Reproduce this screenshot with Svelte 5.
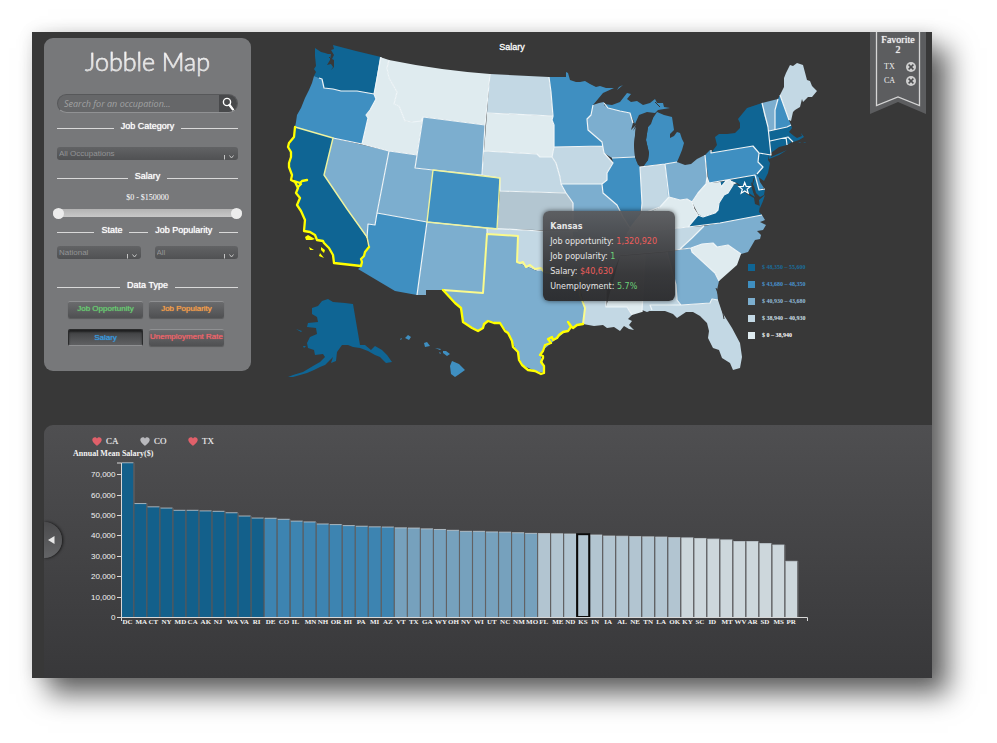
<script>
  const palette = ['#0f6594', '#3f8fc1', '#7caecf', '#c3d8e4', '#dfebef'];
  const barPalette = ['#13608b', '#3d84b1', '#76a1bd', '#b2c5d1', '#cdd7dc'];

  const legend = [
    '$ 48,350 – 55,600',
    '$ 43,680 – 48,350',
    '$ 40,930 – 43,680',
    '$ 38,940 – 40,930',
    '$ 0 – 38,940'
  ];
  const legendText = ['#1a6c9b', '#4a93cf', '#94bddb', '#cfe0ea', '#ffffff'];

  // Each state: id, salary band, outline.
  const states = [
    ['WA', 0, 'M315,48 L318,50 L321,52 L325,53 L328,54 L331,54 L330,60 L327,65 L331,64 L333,67 L331,70 L334,67 L334,60 L332,59 L334,55 L331,50 L334,49 L333,45 L356,51 L381,57 L374,94 L357,91 L341,91 L333,89 L324,88 L322,79 L319,78 L314,76 L316,72 L314,69 L316,66 L315,56 Z'],
    ['OR', 1, 'M314,76 L319,78 L322,79 L324,88 L333,89 L341,91 L357,91 L374,94 L376,99 L370,110 L366,115 L368,118 L362,144 L333,138 L295,127 L296,122 L297,115 L301,108 L305,98 L309,90 L312,83 Z'],
    ['CA', 0, 'M295,127 L333,138 L324,175 L347,209 L366,237 L367,243 L369,247 L365,252 L364,256 L361,259 L362,266 L334,263 L333,255 L329,248 L324,243 L317,240 L315,235 L304,231 L305,220 L301,211 L297,205 L300,197 L297,193 L295,182 L289,167 L291,157 L288,147 L294,137 Z'],
    ['NV', 2, 'M333,138 L389,151 L377,213 L375,225 L368,224 L367,238 L347,209 L324,175 Z'],
    ['ID', 4, 'M380,57 L389,60 L387,68 L389,78 L397,92 L394,104 L399,106 L405,121 L413,122 L421,121 L423,117 L417,155 L389,151 L362,144 L368,118 L366,115 L370,110 L376,99 L374,94 Z'],
    ['MT', 4, 'M389,60 Q438,70 490,74 L485,125 L423,117 L421,122 L413,122 L405,121 L399,106 L394,104 L397,92 L389,78 L387,68 Z'],
    ['WY', 2, 'M423,117 L485,125 L482,175 L415,168 Z'],
    ['UT', 2, 'M389,151 L417,155 L415,168 L433,170 L427,222 L377,213 Z'],
    ['CO', 1, 'M433,170 L500,178 L497,229 L427,222 Z'],
    ['AZ', 1, 'M377,213 L427,222 L417,295 L395,291 L358,269 L362,266 L361,259 L365,252 L369,247 L367,237 L368,224 L375,225 Z'],
    ['NM', 2, 'M427,222 L487,228 L483,293 L443,290 L426,290 L426,295 L417,295 Z'],
    ['OK', 3, 'M487,228 L540,231 L578,231 L580,279 L543,271 L537,271 L530,268 L523,265 L517,262 L518,236 L487,234 Z'],
    ['TX', 2, 'M487,234 L518,236 L517,262 L523,265 L530,268 L537,271 L543,271 L579,278 L580,295 L585,308 L583,324 L570,328 L555,340 L543,350 L541,357 L543,363 L544,373 L535,371 L522,365 L517,352 L508,333 L500,323 L488,321 L483,328 L478,331 L463,322 L461,308 L443,290 L483,293 Z'],
    ['NE', 3, 'M484,151 L537,154 L540,157 L552,157 L556,163 L560,177 L561,184 L566,193 L500,191 L500,178 L482,175 Z'],
    ['SD', 4, 'M487,113 L553,116 L552,120 L554,125 L554,147 L553,157 L540,157 L537,154 L484,151 Z'],
    ['ND', 3, 'M490,74 L549,77 L551,92 L553,116 L487,113 Z'],
    ['MN', 1, 'M549,77 L566,77 L566,72 L568,73 L570,80 L576,82 L580,82 L585,81 L590,84 L596,87 L600,86 L606,88 L614,88 L603,93 L593,105 L591,115 L587,119 L588,130 L602,142 L603,146 L554,147 L554,125 L552,120 L553,116 L551,92 Z'],
    ['IA', 3, 'M554,147 L603,146 L604,153 L613,163 L607,173 L607,180 L602,184 L561,184 L560,177 L556,163 L552,157 Z'],
    ['WI', 2, 'M593,105 L599,103 L604,102 L604,105 L608,108 L620,111 L630,113 L633,123 L631,130 L636,125 L634,145 L635,157 L612,158 L604,153 L602,142 L588,130 L587,119 L591,115 Z'],
    ['MI', 1, 'M604,104 L612,105 L620,102 L627,93 L631,94 L627,99 L631,102 L637,101 L643,105 L650,103 L655,99 L657,103 L663,103 L664,107 L670,108 L658,110 L655,113 L647,112 L639,115 L635,124 L630,113 L620,111 L608,108 Z M657,112 L664,115 L672,117 L674,130 L670,134 L670,138 L674,136 L677,132 L680,133 L682,139 L684,143 L682,150 L680,155 L677,162 L665,164 L643,166 L648,160 L649,153 L646,140 L648,127 L651,124 L653,118 Z M623,85 L617,90 L619,87 Z'],
    ['IL', 1, 'M612,158 L635,157 L637,162 L640,167 L642,203 L640,213 L637,220 L630,228 L625,225 L623,217 L617,205 L603,193 L602,184 L607,180 L607,173 L613,163 Z'],
    ['MO', 2, 'M561,184 L602,184 L603,193 L617,205 L623,217 L630,228 L627,240 L573,237 L573,203 L566,193 Z'],
    ['IN', 3, 'M640,167 L665,164 L669,197 L666,202 L660,207 L650,212 L641,214 L642,203 Z'],
    ['OH', 2, 'M665,164 L677,162 L685,165 L691,164 L697,159 L705,155 L707,177 L706,184 L698,193 L692,202 L687,199 L680,200 L668,197 Z'],
    ['KY', 4, 'M669,197 L680,200 L687,199 L692,202 L694,209 L698,215 L688,227 L660,230 L627,233 L630,228 L641,214 L650,212 L660,207 Z'],
    ['WV', 4, 'M707,177 L709,183 L720,182 L721,187 L726,181 L730,180 L737,183 L733,185 L728,193 L724,195 L719,203 L718,210 L715,213 L703,217 L698,214 L692,202 L698,193 L706,184 Z'],
    ['VA', 0, 'M688,227 L720,223 L762,215 L759,212 L760,206 L755,204 L754,198 L747,194 L743,190 L737,184 L733,185 L728,193 L724,195 L719,203 L718,210 L715,213 L703,217 L698,215 Z M765,195 L763,201 L760,208 L759,200 Z'],
    ['MD', 0, 'M720,182 L755,175 L759,190 L765,189 L764,195 L760,197 L756,193 L754,186 L751,182 L753,192 L755,197 L747,192 L741,186 L737,183 L730,180 L726,181 L721,187 Z'],
    ['DE', 1, 'M755,175 L758,174 L760,182 L764,188 L759,190 Z'],
    ['NJ', 0, 'M759,153 L769,155 L768,160 L770,163 L768,173 L764,181 L757,176 L757,174 L763,167 L758,162 Z'],
    ['PA', 1, 'M705,155 L710,150 L711,153 L753,146 L759,153 L758,162 L763,167 L757,174 L755,175 L709,183 Z'],
    ['NY', 0, 'M711,153 L717,145 L715,137 L719,134 L727,134 L735,133 L740,128 L740,123 L738,119 L747,108 L762,103 L764,115 L768,127 L770,141 L771,153 L771,157 L787,150 L779,155 L769,159 L769,155 L759,153 L753,146 Z'],
    ['VT', 2, 'M762,103 L778,99 L775,110 L775,130 L769,131 L768,127 L764,115 Z'],
    ['NH', 1, 'M778,99 L780,95 L789,120 L791,125 L787,127 L775,130 L775,110 Z'],
    ['ME', 3, 'M780,95 L784,87 L784,78 L786,73 L790,65 L793,66 L797,63 L803,65 L807,80 L810,81 L812,86 L817,91 L812,97 L808,97 L803,102 L802,99 L800,107 L795,110 L793,112 L791,121 L789,120 Z'],
    ['MA', 0, 'M769,131 L775,130 L787,127 L791,125 L792,128 L789,132 L794,136 L797,138 L802,136 L801,133 L804,137 L799,140 L793,142 L788,137 L769,141 Z M798,143 L801,142 L800,143 Z M803,143 L806,142 L805,143 Z'],
    ['CT', 0, 'M770,141 L786,137 L787,145 L779,147 L771,153 Z'],
    ['RI', 0, 'M786,137 L788,137 L792,142 L787,145 Z'],
    ['TN', 3, 'M627,233 L660,230 L688,227 L704,226 L692,238 L680,249 L667,251 L620,255 Z'],
    ['NC', 2, 'M704,226 L720,223 L762,215 L765,220 L760,222 L766,225 L763,230 L757,231 L761,235 L760,239 L755,240 L748,252 L741,254 L728,245 L717,247 L713,243 L691,248 L680,249 L692,238 Z'],
    ['SC', 4, 'M691,248 L702,244 L713,243 L717,247 L728,245 L741,254 L737,265 L728,273 L719,281 L715,273 L692,252 Z'],
    ['GA', 2, 'M667,252 L691,248 L692,252 L715,273 L719,281 L717,290 L718,300 L712,300 L710,303 L681,305 L677,300 L676,285 Z'],
    ['AL', 3, 'M645,254 L667,252 L676,285 L677,300 L681,305 L650,305 L652,310 L647,312 L642,310 Z'],
    ['MS', 4, 'M620,256 L645,254 L642,312 L632,315 L627,307 L606,307 Z'],
    ['AR', 3, 'M576,237 L627,240 L620,256 L606,290 L580,290 Z'],
    ['LA', 3, 'M580,288 L606,288 L606,307 L627,307 L632,315 L628,319 L632,321 L629,325 L634,330 L629,329 L624,326 L620,331 L614,327 L607,328 L603,325 L594,326 L583,324 L585,308 Z'],
    ['FL', 3, 'M650,305 L681,305 L710,303 L712,300 L718,300 L722,312 L732,328 L740,343 L742,357 L740,368 L733,370 L730,363 L722,358 L719,350 L713,348 L708,338 L709,331 L707,323 L700,316 L693,312 L686,312 L677,318 L673,314 L665,311 L650,311 Z'],
    ['AK', 0, 'M312,308 L318,306 L322,301 L328,299 L333,302 L345,303 L353,304 L360,345 L365,345 L371,350 L375,346 L382,350 L387,355 L392,362 L386,363 L380,357 L375,355 L368,351 L360,348 L353,347 L348,345 L342,345 L337,352 L336,361 L331,363 L333,357 L330,360 L325,365 L320,367 L314,370 L307,373 L293,377 L288,377 L293,375 L303,372 L313,366 L320,362 L325,357 L323,354 L315,355 L314,350 L308,348 L307,343 L310,337 L317,334 L316,328 L307,327 L308,323 L318,322 L317,317 L312,314 Z M296,329 L302,331 L301,332 Z M303,346 L306,346 L304,348 Z'],
    ['HI', 1, 'M405,338 L408,335 L411,337 L409,340 Z M400,339 L402,338 L401,340 Z M424,343 L427,342 L430,346 L425,347 Z M435,348 L441,349 L440,350 Z M443,351 L446,351 L450,354 L447,356 L443,353 Z M439,352 L441,353 L440,354 Z M452,361 L459,364 L465,370 L458,375 L455,377 L451,374 L450,366 Z']
  ];

  const borders = [
    'M381,57 L374,94 L376,99 L370,110 L366,115 L368,118 L362,144',
    'M319,78 L322,79 L324,88 L333,89 L341,91 L357,91 L374,94',
    'M389,60 L387,68 L389,78 L397,92 L394,104 L399,106 L405,121 L413,122 L421,121 L423,117 L415,168 L433,170 L482,175',
    'M333,138 L362,144 L389,151 L417,155',
    'M389,151 L377,213 L427,222 L417,295',
    'M377,213 L375,225 L368,224 L367,238',
    'M490,74 L485,125 L423,117 M485,125 L482,175 L500,178 L500,191',
    'M487,113 L553,116 M549,77 L551,92 L553,116 L552,120 L554,125 L554,147',
    'M484,151 L537,154 L540,157 L552,157 L556,163 L560,177 L561,184 L566,193 L571,200 L573,203 L573,231',
    'M554,147 L552,157 M554,147 L603,146 M561,184 L602,184 L607,180 L607,173 L613,163 L604,153 L602,142 L588,130 L587,119 L591,115 L593,105',
    'M604,103 L608,108 L620,111 L630,113 L633,123 M612,158 L635,157 M602,184 L603,193 L617,205 L623,217 L630,228 L641,214 L642,203 L640,167 L665,164 L677,162',
    'M500,191 L566,193 M487,228 L540,231 L578,231 M487,228 L487,234',
    'M427,222 L497,229',
    'M665,164 L669,197 L680,200 L687,199 L692,202 L698,193 L706,184 L707,177 L705,155',
    'M669,197 L660,207 L641,214 M707,177 L709,183 L755,175 L759,190 L765,189',
    'M692,202 L694,209 L698,215 L703,217 L715,213 L718,210 L719,203 L724,195 L728,193 L733,185 L730,180 L726,181 L721,187 L720,182',
    'M698,215 L688,227 M627,233 L660,230 L688,227 L720,223 L762,215',
    'M704,226 L692,238 L680,249 M620,255 L667,251 L691,248 L702,244 L713,243 L717,247 L728,245 L741,254',
    'M691,248 L692,252 L715,273 L719,281 M718,300 L712,299 L710,303 L681,305 L677,300 L676,285 L667,252',
    'M681,305 L650,305 L652,310 M645,254 L642,312 M632,315 L627,307 L606,307 L606,290',
    'M711,150 L711,153 L753,146 L759,153 L771,155 L768,127 L762,103 M759,153 L758,162 L763,167 L757,174',
    'M778,99 L775,110 L775,130 M769,131 L787,127 L791,125 M780,95 L789,120 M770,141 L788,137 L793,142 M786,137 L787,145'
  ].join(' ');

  const bars = [
    ['DC', 75.6, 0], ['MA', 55.6, 0], ['CT', 54, 0], ['NY', 53.4, 0], ['MD', 52.3, 0], ['CA', 52.3, 0], ['AK', 52, 0],
    ['NJ', 51.8, 0], ['WA', 51.1, 0], ['VA', 49.5, 0], ['RI', 48.5, 0], ['DE', 48.4, 1], ['CO', 47.9, 1], ['IL', 47, 1],
    ['MN', 46.6, 1], ['NH', 45.6, 1], ['OR', 45.3, 1], ['HI', 44.8, 1], ['PA', 44.5, 1], ['MI', 44.2, 1], ['AZ', 44.1, 1],
    ['VT', 43.7, 2], ['TX', 43.6, 2], ['GA', 43.2, 2], ['WY', 42.9, 2], ['OH', 42.5, 2], ['NV', 42, 2], ['WI', 42, 2],
    ['UT', 41.7, 2], ['NC', 41.6, 2], ['NM', 41.3, 2], ['MO', 41, 2], ['FL', 40.9, 3], ['ME', 40.8, 3], ['ND', 40.7, 3],
    ['KS', 40.6, 3], ['IN', 40.2, 3], ['IA', 39.7, 3], ['AL', 39.6, 3], ['NE', 39.4, 3], ['TN', 39.3, 3], ['LA', 39.2, 3],
    ['OK', 38.9, 3], ['KY', 38.8, 4], ['SC', 38.5, 4], ['ID', 38.2, 4], ['MT', 37.8, 4], ['WV', 37, 4], ['AR', 37, 4],
    ['SD', 36, 4], ['MS', 35.3, 4], ['PR', 27.3, 4]
  ];
  const base = 617;
  const yOf = (v) => base - v * 2.04;
  const xOf = (i) => 121.5 + i * 13.02;
  const ticks = [0, 10, 20, 30, 40, 50, 60, 70];

  const favourites = [['CA', true], ['CO', false], ['TX', true]];
  const facts = [
    ['Job opportunity', '1,320,920', 'bad'],
    ['Job popularity', '1', 'good'],
    ['Salary', '$40,630', 'bad'],
    ['Unemployment', '5.7%', 'good']
  ];
  const dataTypes = [
    ['Job Opportunity', 'green'],
    ['Job Popularity', 'orange'],
    ['Salary', 'blue'],
    ['Unemployment Rate', 'red']
  ];
  let active = $state('Salary');
  let low = $state(0);
  let high = $state(150000);
</script>

{#snippet arrow()}
  <svg class="arrow" width="12" height="6" viewBox="0 0 12 6" aria-hidden="true">
    <path d="M1.5 1V5.5M6.5 1.5L8.5 4L10.5 1.5" fill="none" stroke="#c4c4c4" stroke-width="1" />
  </svg>
{/snippet}

<div class="page">
  <main class="app">
    <section class="top">
      <aside class="sidebar">
        <h1>Jobble Map</h1>
        <form class="search" onsubmit={(e) => e.preventDefault()}>
          <input type="text" placeholder="Search for an occupation..." aria-label="Search for an occupation" />
          <button aria-label="Search">
            <svg width="13" height="14" viewBox="0 0 13 14">
              <circle cx="5" cy="5" r="3.6" fill="none" stroke="#fff" stroke-width="1.4" />
              <path d="M7.5 8L10.8 12.4" stroke="#fff" stroke-width="2.4" stroke-linecap="round" />
            </svg>
          </button>
        </form>

        <label class="rule first" for="category">Job Category</label>
        <div class="select category">
          <select id="category"><option>All Occupations</option></select>
          {@render arrow()}
        </div>

        <h2 class="rule salary">Salary</h2>
        <output class="range-text">${low} - ${high}</output>
        <div class="slider">
          <input type="range" min="0" max="150000" bind:value={low} aria-label="Lowest salary" />
          <input type="range" min="0" max="150000" bind:value={high} aria-label="Highest salary" />
        </div>

        <div class="rule double">
          <label for="state">State</label>
          <i></i>
          <label for="popularity">Job Popularity</label>
        </div>
        <div class="pair">
          <div class="select state">
            <select id="state"><option>National</option></select>
            {@render arrow()}
          </div>
          <div class="select popularity">
            <select id="popularity"><option>All</option></select>
            {@render arrow()}
          </div>
        </div>

        <h2 class="rule data">Data Type</h2>
        <div class="types">
          {#each dataTypes as [name, tone]}
            <button class={tone} class:active={active === name} onclick={() => (active = name)}>{name}</button>
          {/each}
        </div>
      </aside>

      <div class="map">
        <svg viewBox="280 38 560 350" role="img" aria-label="Salary by state">
          <text class="map-title" x="512" y="50" text-anchor="middle">Salary</text>
          {#each states as [id, band, d] (id)}
            <path {d} fill={palette[band]} />
          {/each}
          <path d="M500,191 L566,193 L571,200 L573,203 L573,231 L497,229 Z" fill="#b3c6d1" />
          <path d="M633,131 L637,122 L642,115 L650,113 L653,118 L648,127 L646,140 L649,153 L648,160 L643,167 L638,165 L635,157 L634,145 L636,127 Z" fill="#383838" />
          <path d="M722,308 L724,319 M716,288 L719,296 M754,178 L752,187 L756,197 M329,57 L333,61 M655,102 L660,107" fill="none" stroke="#383838" />
          <path class="border" d={borders} />
          <path class="fav-soft" d="M433,170 L500,178 L497,229 L427,222 Z" />
          <path class="fav-soft" d="M295,127 L333,138 L324,175 L347,209 L367,237 L369,247" />
          <path class="fav-mid" d="M443,290 L483,293 L487,234 L518,236 L517,262 L520,263 L523,262 L526,267 L530,265 L535,269 L541,268 L544,272 L579,278 L580,295 L585,308 L583,324" />
          <path class="fav" d="M583,324 L577,325 L573,328 L571,326 L568,322 L571,327 L568,331 L563,332 L559,335 L557,338 L553,340 L552,337 L548,339 L551,343 L545,345 L543,351 L540,355 L543,356 L543,358 L541,362 L544,366 L544,373 L541,374 L535,371 L528,370 L522,365 L519,360 L518,352 L513,347 L512,341 L508,333 L505,331 L500,323 L494,323 L488,321 L484,324 L483,328 L478,331 L472,328 L463,322 L461,308 L455,303 L443,290" />
          <path class="fav" d="M369,247 L365,252 L364,256 L361,259 L362,262 L361,266 L334,263 L333,255 L329,248 L324,243 L323,241 L317,240 L315,235 L310,232 L304,231 L305,220 L301,211 L297,205 L300,198 L296,193 L298,188 L295,182 L291,180 L292,175 L289,167 L289,163 L291,157 L291,152 L288,147 L289,143 L294,137 L295,127 M294,181 L300,183 L302,181 L307,180 M301,184 L298,187" />
          <path d="M305,237 L308,235 L315,239 L312,240 L306,240 Z M309,247 L314,250 L310,250 Z M321,247 L325,250 L324,253 L321,250 Z M320,253 L324,258 L319,256 Z" fill="#ffff00" />
          <path d="M744.7 182.5L746.2 186.4L750.3 186.6L747.1 189.2L748.2 193.2L744.7 190.9L741.2 193.2L742.3 189.2L739.1 186.6L743.2 186.4Z" fill="#0f6594" stroke="#fff" stroke-width="1.2" />
          {#each legend as label, i}
            <rect x="748" y={264 + i * 17} width="7" height="7" fill={palette[i]} />
            <text class="legend" x="762" y={269 + i * 17} fill={legendText[i]}>{label}</text>
          {/each}
        </svg>
        <div class="tooltip" role="tooltip">
          <strong>Kansas</strong>
          {#each facts as [name, value, tone]}
            <p>{name}: <span class={tone}>{value}</span></p>
          {/each}
        </div>
      </div>

      <aside class="ribbon">
        <svg viewBox="0 0 56 82" width="56" height="82" aria-hidden="true">
          <path d="M0 0H56V82L28 70L0 82Z" fill="#5c5d5f" />
          <path d="M6.5 0V73.5L28 65L49.5 73.5V0" fill="none" stroke="#d5d5d5" stroke-width="1.3" />
        </svg>
        <div class="ribbon-body">
          <h2>Favorite<br />2</h2>
          {#each ['TX', 'CA'] as id}
            <div class="fav-row">
              <span>{id}</span>
              <button aria-label={`Remove ${id}`}>
                <svg width="10" height="10" viewBox="0 0 10 10">
                  <circle cx="5" cy="5" r="5" fill="#cfcfcf" />
                  <path d="M2.6 2.6L7.4 7.4M7.4 2.6L2.6 7.4" stroke="#4c4d4f" stroke-width="1.5" />
                </svg>
              </button>
            </div>
          {/each}
        </div>
      </aside>
    </section>

    <section class="panel">
      <div class="hearts">
        {#each favourites as [id, on]}
          <button>
            <svg width="10" height="9" viewBox="0 0 10 9">
              <path d="M5 9C3.5 7.3 .3 5.4 .3 2.8C.3 .2 3.8-.5 5 1.6C6.2-.5 9.7 .2 9.7 2.8C9.7 5.4 6.5 7.3 5 9Z" fill={on ? '#e0606a' : '#b9b9bd'} />
            </svg>
            {id}
          </button>
        {/each}
      </div>
      <svg class="chart" viewBox="44 446 888 184" role="img" aria-label="Annual mean salary by state">
        <text class="axis-title" x="73" y="456">Annual Mean Salary($)</text>
        {#each bars as [id, v, band], i (id)}
          <rect x={xOf(i)} y={yOf(v)} width="12" height={base - yOf(v)} fill={barPalette[band]} />
          <path d={`M${xOf(i)} ${yOf(v)}h12`} stroke="#c3ccd2" stroke-width="0.8" />
          <path d={`M${xOf(i) + 12.5} ${yOf(v)}V${base}`} stroke="#626264" stroke-width="1.2" />
          <text class="state-label" x={xOf(i) + 1} y="624">{id}</text>
        {/each}
        <rect x={xOf(35)} y={yOf(40.6)} width="12" height={base - yOf(40.6)} fill="none" stroke="#0a0a0a" stroke-width="2" />
        <path d="M117 463H121.5V621M121.5 617.5H807.5V621" fill="none" stroke="#d8d8d8" />
        {#each ticks as t}
          <path d={`M117 ${Math.round(yOf(t)) + 0.5}h4`} stroke="#d8d8d8" />
          <text class="tick" x="115.5" y={Math.round(yOf(t)) + 3} text-anchor="end">{t ? `${t},000` : '0'}</text>
        {/each}
      </svg>
      <button class="collapse" aria-label="Previous">
        <svg width="7" height="8" viewBox="0 0 7 8"><path d="M0 4L6.5 0V8Z" fill="#e8e8e8" /></svg>
      </button>
    </section>
  </main>
</div>

<style>
  :global(body) {
    background: #fff;
    font-family: 'Liberation Sans', Arial, sans-serif;
  }
  * {
    box-sizing: border-box;
  }
  h1, h2, p {
    margin: 0;
    font-weight: 400;
  }
  button, select, input {
    border: 0;
    margin: 0;
    padding: 0;
    font: inherit;
    color: inherit;
    background: none;
  }
  svg {
    display: block;
  }
  .page {
    padding: 32px 65px 65px 32px;
    overflow: hidden;
  }
  .app {
    background: #383838;
    box-shadow: 16px 16px 26px rgba(0, 0, 0, 0.62), 0 0 14px rgba(0, 0, 0, 0.1);
  }
  .top {
    position: relative;
    display: flex;
    align-items: flex-start;
    gap: 29px;
    min-height: 393px;
    padding: 6px 0 0 12px;
  }
  .sidebar {
    display: flex;
    flex-direction: column;
    flex: 0 0 207px;
    padding: 7px 13px 25px;
    border-radius: 9px;
    background: #77787a;
    color: #fff;
    font-size: 8px;
  }
  h1 {
    height: 32px;
    font: 300 25px/32px Lato, sans-serif;
    text-align: center;
    color: transparent;
    background: linear-gradient(#fff 30%, #c9c9c9 85%);
    background-clip: text;
    -webkit-text-stroke: 0.5px #e8e8e8;
  }
  .search {
    display: flex;
    height: 19px;
    margin-top: 17px;
    border: 1px solid #57585a;
    border-bottom-color: #919294;
    border-radius: 10px;
    overflow: hidden;
    background: #666769;
  }
  .search input {
    flex: 1;
    min-width: 0;
    padding-left: 6px;
    font: italic 9px 'Open Sans', sans-serif;
  }
  .search input::placeholder {
    color: #a1a2a3;
    opacity: 1;
  }
  .search button {
    width: 18px;
    padding-left: 3px;
    background: #48494b;
  }
  .rule {
    display: flex;
    align-items: center;
    gap: 7px;
    height: 12px;
    font-size: 9px;
    line-height: 12px;
    white-space: nowrap;
    text-shadow: 0 0 1px #fff;
  }
  .rule::before,
  .rule::after,
  .rule i {
    content: '';
    flex: 1;
    height: 1px;
    margin-top: 5px;
    background: #d9d9d9;
  }
  .first {
    margin-top: 7px;
  }
  .category {
    margin-top: 15px;
  }
  .salary {
    margin-top: 10px;
  }
  .double {
    margin-top: 7px;
  }
  .double::before {
    flex-grow: 2;
  }
  .data {
    margin-top: 20px;
  }
  .select {
    position: relative;
    height: 13px;
    border-radius: 3px;
    background: linear-gradient(#626365, #505153);
  }
  .select select {
    display: block;
    width: 100%;
    height: 13px;
    padding-left: 2px;
    appearance: none;
    font-size: 8px;
    color: #939496;
  }
  .arrow {
    position: absolute;
    right: 3px;
    bottom: 0;
    pointer-events: none;
  }
  .range-text {
    height: 10px;
    margin-top: 11px;
    font: 8px/10px 'Liberation Serif', serif;
    text-align: center;
  }
  .slider {
    position: relative;
    height: 8px;
    margin: 6px -4px 0;
    border-radius: 4px;
    background: linear-gradient(#b3b3b3, #c8c8c8);
  }
  .slider input {
    position: absolute;
    inset: -2px 0 0;
    width: 100%;
    height: 12px;
    appearance: none;
    pointer-events: none;
  }
  .slider input::-webkit-slider-thumb {
    appearance: none;
    width: 11px;
    height: 11px;
    border-radius: 50%;
    background: #ececec;
    pointer-events: auto;
  }
  .pair {
    display: flex;
    gap: 14px;
    margin-top: 10px;
  }
  .state,
  .popularity {
    flex: 1;
  }
  .types {
    display: grid;
    grid-template-columns: 75px 75px;
    gap: 11px 6px;
    margin: 10px 0 0 11px;
  }
  .types button {
    height: 17px;
    padding-bottom: 3px;
    border-top: 1px solid #8f9092;
    border-radius: 2px;
    background: linear-gradient(#6a6b6d, #4f5052);
    box-shadow: 0 1px 1px rgba(0, 0, 0, 0.25);
    line-height: 12px;
    white-space: nowrap;
    text-shadow: 0 0 1px currentColor;
  }
  .types .green { color: #69cc72; }
  .types .orange { color: #f9a04a; }
  .types .blue { color: #389be0; }
  .types .red { color: #f0656b; }
  .types button.active {
    padding: 0;
    border: 1px solid #2a2b2c;
    border-bottom-color: #8f9092;
    background: linear-gradient(#3c3d3f, #606163);
    box-shadow: inset 0 2px 2px rgba(0, 0, 0, 0.5);
  }
  .map {
    position: relative;
    flex: 0 1 560px;
  }
  .map > svg {
    width: 100%;
  }
  .map-title {
    font-size: 9px;
    fill: #fff;
    stroke: #fff;
    stroke-width: 0.3px;
  }
  .border {
    fill: none;
    stroke: #eef5f8;
    stroke-width: 1.2px;
    stroke-linejoin: round;
  }
  .fav, .fav-mid, .fav-soft {
    fill: none;
    stroke-linejoin: round;
    stroke-linecap: round;
  }
  .fav { stroke: #ffff00; stroke-width: 2.3px; }
  .fav-mid { stroke: #fbfb8c; stroke-width: 2px; }
  .fav-soft { stroke: #eef3a0; stroke-width: 1.4px; }
  .legend {
    font: 700 6px 'Liberation Serif', serif;
  }
  .tooltip {
    position: absolute;
    left: 47%;
    top: 173px;
    width: 132px;
    padding: 8px 7px 7px;
    border-radius: 6px;
    background: linear-gradient(rgba(88, 89, 92, 0.95), rgba(48, 48, 50, 0.95) 70%, rgba(42, 42, 44, 0.96));
    box-shadow: 0 0 5px rgba(0, 0, 0, 0.6);
    color: #e6e6e6;
    font: 8px/15px 'DejaVu Sans', Verdana, sans-serif;
    white-space: nowrap;
  }
  .tooltip strong {
    display: block;
  }
  .bad { color: #ef5d5b; }
  .good { color: #6cd078; }
  .ribbon {
    position: absolute;
    top: 0;
    right: 6px;
    width: 56px;
    color: #f0f0f0;
    font-family: 'Liberation Serif', serif;
  }
  .ribbon-body {
    position: absolute;
    inset: 3px 0 auto;
  }
  .ribbon h2 {
    font-size: 10px;
    line-height: 10px;
    text-align: center;
    text-shadow: 0 0 1px #fff;
  }
  .fav-row {
    display: flex;
    align-items: flex-start;
    justify-content: space-between;
    height: 14px;
    padding: 0 10px 0 14px;
    font-size: 8px;
    line-height: 10px;
  }
  h2 + .fav-row {
    margin-top: 7px;
  }
  .panel {
    position: relative;
    min-height: 253px;
    margin-left: 12px;
    padding-top: 11px;
    border-radius: 9px 0 0 0;
    background: linear-gradient(#4f4f51, #38383a);
    color: #f2f2f2;
    font-family: 'Liberation Serif', serif;
  }
  .hearts {
    display: flex;
    height: 10px;
    padding-left: 48px;
  }
  .hearts button {
    display: flex;
    align-items: center;
    gap: 4px;
    width: 48px;
    font-size: 9px;
    line-height: 10px;
    text-shadow: 0 0 1px #999;
  }
  .chart {
    width: 100%;
    max-width: 888px;
  }
  .chart text {
    fill: #f2f2f2;
  }
  .axis-title {
    font: 700 8px 'Liberation Serif', serif;
  }
  .state-label {
    font: 700 7px 'Liberation Serif', serif;
  }
  .tick {
    font: 8px 'Liberation Sans', sans-serif;
  }
  .collapse {
    position: absolute;
    left: 0;
    top: 97px;
    display: flex;
    align-items: center;
    width: 18px;
    height: 36px;
    padding-left: 4px;
    border-radius: 0 18px 18px 0;
    background: linear-gradient(#4b4b4d, #636466);
    box-shadow: 1px 0 3px rgba(0, 0, 0, 0.7);
  }
</style>
